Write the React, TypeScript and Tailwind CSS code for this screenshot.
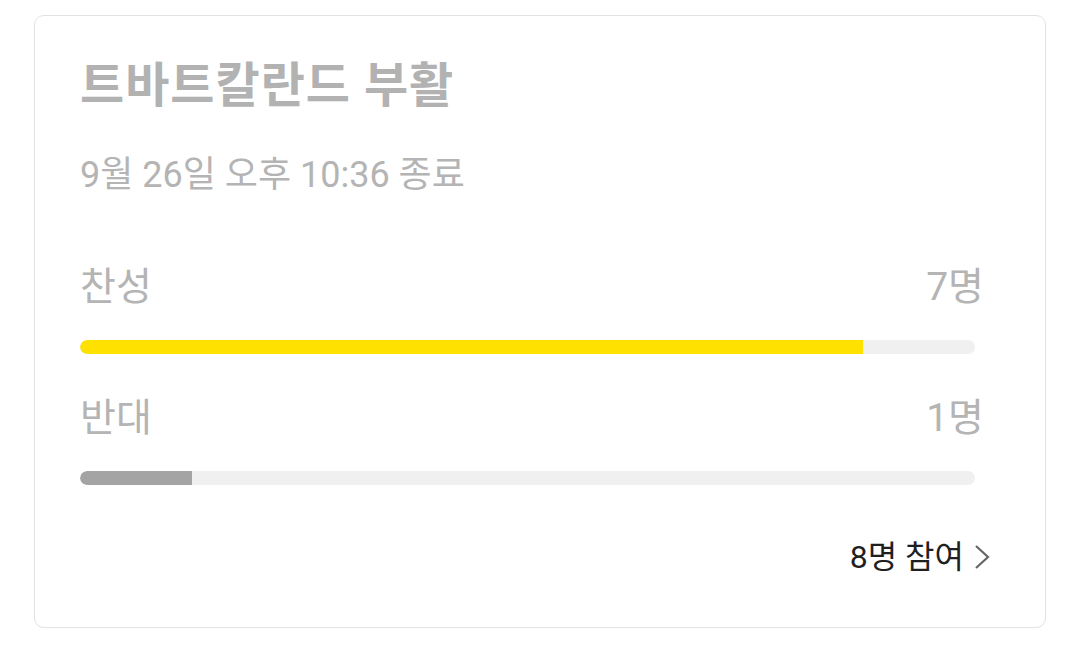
const font = { fontFamily: "Roboto, 'Noto Sans CJK KR', sans-serif" };

type Option = { label: string; count: number; color: string };

const options: Option[] = [
	{ label: "찬성", count: 7, color: "bg-[#ffe100]" },
	{ label: "반대", count: 1, color: "bg-[#a4a4a4]" },
];

const total = 8;

function OptionRow({ option }: { option: Option }) {
	return (
		<li className="flex flex-col">
			<div className="flex items-end justify-between pr-[61px] text-[39px] leading-none text-[#b4b4b4]">
				<span>{option.label}</span>
				<span>{option.count}명</span>
			</div>

			<div className="mt-[33px] mr-[70px] h-[14px] overflow-hidden rounded-full bg-[#f0f0f0]">
				<div
					className={`h-full rounded-l-full ${option.color}`}
					style={{ width: `${(option.count / total) * 100}%` }}
				/>
			</div>
		</li>
	);
}

function App() {
	return (
		<div className="h-[651px] w-[1080px] bg-white pt-[15px] pl-[34px]" style={font}>
			<section className="flex h-[613px] w-[1012px] flex-col rounded-[10px] border border-[#e2e2e2] bg-white pl-[45px]">
				<h1 className="mt-[46px] text-[48px] font-bold leading-none tracking-[1px] text-[#b2b2b2]">
					트바트칼란드 부활
				</h1>

				<p className="mt-[47px] text-[36px] leading-none text-[#b4b4b4]">9월 26일 오후 10:36 종료</p>

				<ol className="mt-[75px] flex flex-col gap-[45px]">
					{options.map((option) => (
						<OptionRow key={option.label} option={option} />
					))}
				</ol>

				<div className="mt-[56px] flex items-center justify-end pr-[55px] text-[32px] leading-none text-[#1f1f1f]">
					<span>{total}명 참여</span>
					<svg viewBox="0 0 16 26" className="ml-[10px] h-[26px] w-[16px]" fill="none">
						<polyline points="2,2 14,13 2,24" stroke="#666666" strokeWidth="2.2" />
					</svg>
				</div>
			</section>
		</div>
	);
}

export default App;
